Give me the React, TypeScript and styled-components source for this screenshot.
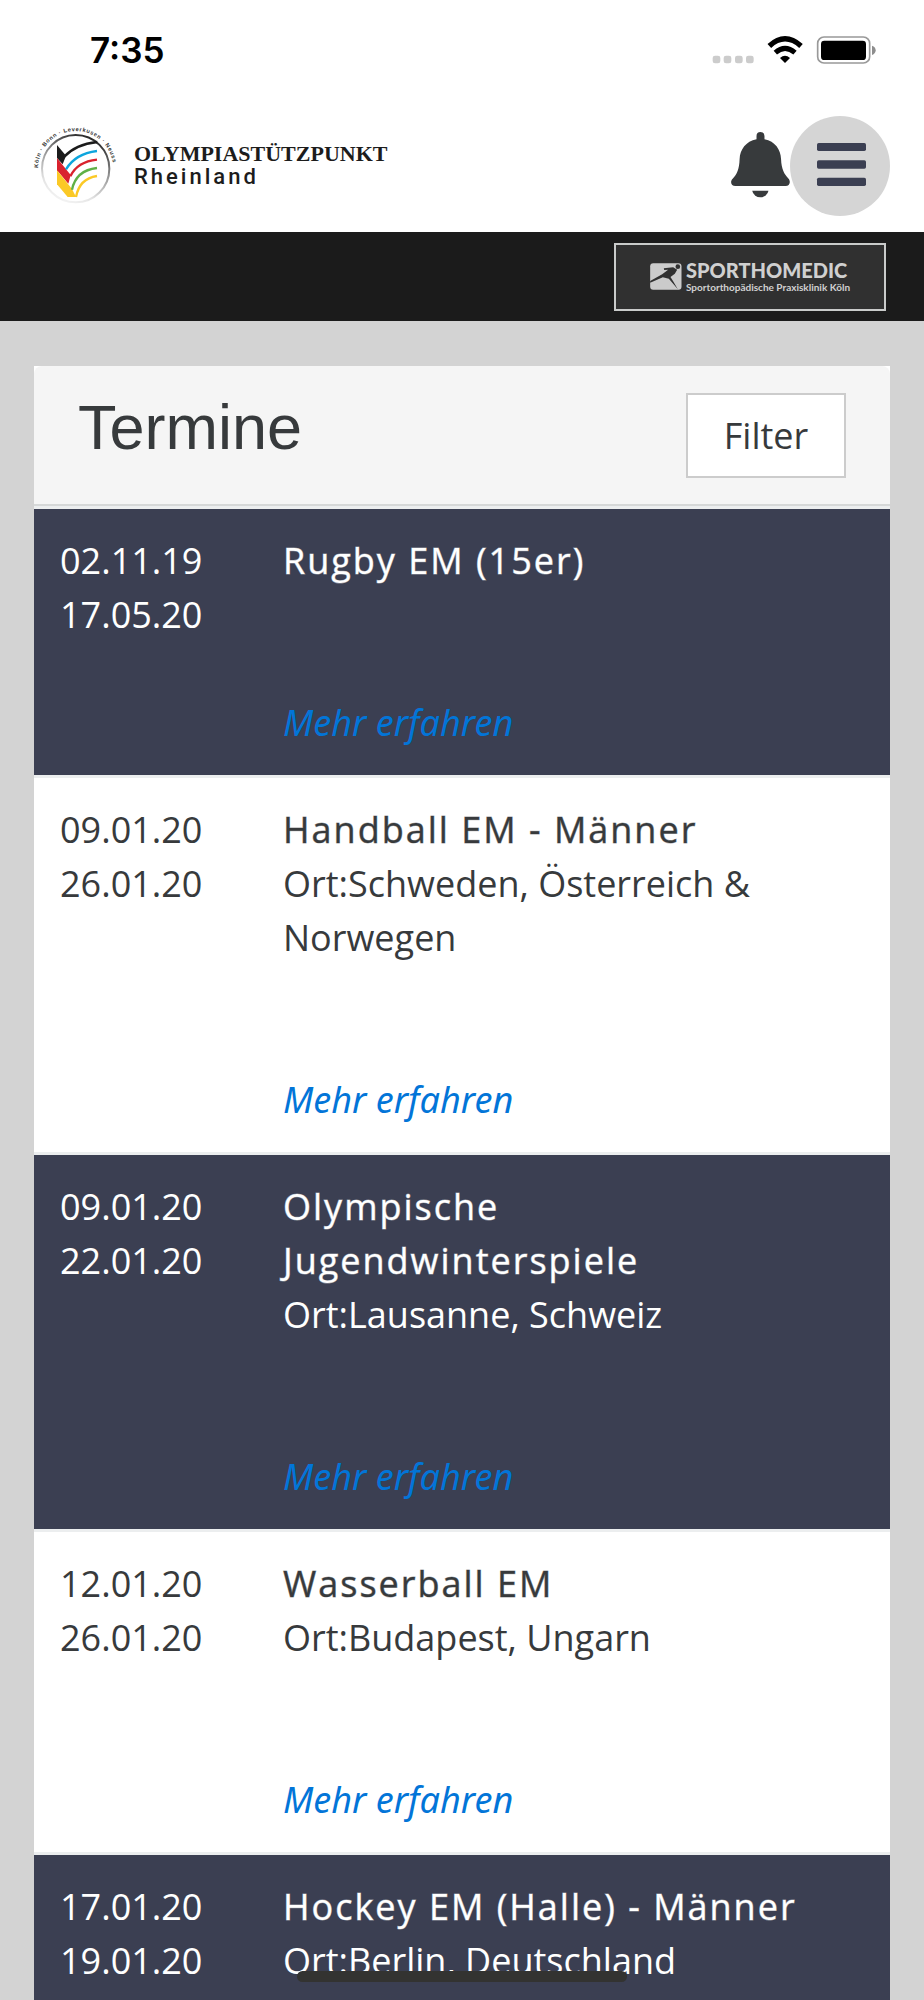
import React from "react";
import styled, { createGlobalStyle, css } from "styled-components";

const navy = "#3b3f52";
const ink = "#373a3c";

const GlobalStyle = createGlobalStyle`
  * { box-sizing: border-box; }
  body {
    margin: 0;
    background: #d3d3d3;
    color: ${ink};
    font-family: "Open Sans", "Liberation Sans", sans-serif;
    font-size: 36px;
    line-height: 54px;
  }
`;

const Shell = styled.div`
  display: flex;
  flex-direction: column;
  height: 100vh;
  overflow: hidden;
`;

const StatusBar = styled.div`
  display: flex;
  align-items: center;
  justify-content: space-between;
  height: 100px;
  padding: 0 48px 0 90px;
  flex: none;
  background: #fff;
  color: #000;
`;

const Clock = styled.time`
  font-family: Inter, "Liberation Sans", sans-serif;
  font-size: 35px;
  font-weight: 600;
`;

const Header = styled.header`
  display: flex;
  align-items: center;
  justify-content: space-between;
  height: 132px;
  padding: 0 34px 0 32px;
  flex: none;
  background: #fff;
`;

const Brand = styled.a`
  display: flex;
  align-items: center;
  gap: 12px;
  color: #1c1c1c;
  text-decoration: none;
`;

const BrandText = styled.span`
  display: flex;
  flex-direction: column;
`;

const BrandName = styled.span`
  font: bold 22px/22px "Liberation Serif", serif;
`;

const BrandRegion = styled.span`
  font: 500 22px/24px Roboto, "Liberation Sans", sans-serif;
  letter-spacing: 3px;
`;

const Actions = styled.div`
  display: flex;
  align-items: center;
`;

const IconButton = styled.button<{ $round?: boolean }>`
  display: flex;
  align-items: center;
  justify-content: center;
  padding: 0;
  border: 0;
  background: none;
  ${(p) =>
    p.$round &&
    css`
      width: 100px;
      height: 100px;
      border-radius: 50%;
      background: #d5d5d5;
    `}
`;

const SponsorBar = styled.aside`
  display: flex;
  align-items: center;
  justify-content: flex-end;
  height: 89px;
  padding: 0 38px;
  flex: none;
  background: #1b1b1b;
`;

const Sponsor = styled.a`
  display: flex;
  align-items: center;
  justify-content: center;
  gap: 4px;
  width: 272px;
  height: 68px;
  border: 2px solid #c9cbca;
  background: #303030;
  color: #d0d0d0;
  text-decoration: none;
`;

const SponsorText = styled.span`
  display: flex;
  flex-direction: column;
  font-family: Lato, sans-serif;
`;

const SponsorName = styled.span`
  font-size: 20px;
  font-weight: 900;
  line-height: 20px;
`;

const SponsorClaim = styled.span`
  font-size: 10px;
  font-weight: 700;
  line-height: 14px;
`;

const Main = styled.main`
  flex: 1;
  min-height: 0;
  padding: 45px 34px 0;
  overflow-y: auto;
  scrollbar-width: none;
`;

const Card = styled.section`
  background: #fff;
`;

const CardHeader = styled.div`
  display: flex;
  align-items: flex-start;
  justify-content: space-between;
  height: 140px;
  padding: 27px 44px 0 44px;
  border-bottom: 2px solid #d6d8d8;
  border-radius: 8px 8px 0 0;
  background: #f5f5f5;
`;

const Heading = styled.h1`
  margin: 0;
  font: 400 63px/68px "Liberation Sans", Arial, sans-serif;
`;

const FilterButton = styled.button`
  width: 160px;
  height: 85px;
  padding: 0;
  border: 2px solid #ccc;
  background: #fff;
  color: ${ink};
  font: inherit;
`;

const EventList = styled.ul`
  margin: 0;
  padding: 0;
  list-style: none;
`;

const EventRow = styled.li<{ $dark: boolean }>`
  display: grid;
  grid-template-columns: 223px 1fr;
  padding: 25px 60px 25px 26px;
  border-top: 3px solid #eceeef;
  background: ${(p) => (p.$dark ? navy : "#fff")};
  color: ${(p) => (p.$dark ? "#fff" : ink)};
`;

const Dates = styled.div`
  display: flex;
  flex-direction: column;
`;

const Details = styled.div`
  display: flex;
  flex-direction: column;
  align-items: flex-start;
`;

const Title = styled.h2`
  margin: 0;
  font-size: 36px;
  font-weight: 400;
  line-height: 54px;
  letter-spacing: 2px;
  -webkit-text-stroke: 1px color-mix(in srgb, currentColor 45%, transparent);
`;

const Place = styled.p`
  margin: 0;
`;

const MoreLink = styled.a<{ $gap: number }>`
  margin-top: ${(p) => p.$gap}px;
  color: #0275d8;
  font-family: "Noto Sans", "Open Sans", sans-serif;
  font-style: italic;
  text-decoration: none;
`;

const HomeIndicator = styled.div`
  position: fixed;
  bottom: 18px;
  left: 50%;
  width: 330px;
  height: 11px;
  margin-left: -165px;
  border-radius: 6px;
  background: #333331;
`;

const StatusIcons = () => (
  <svg width="164" height="28" viewBox="750 108 492 84" aria-hidden="true">
    {[752, 785, 819, 852].map((x) => (
      <rect key={x} x={x} y="167" width="23" height="23" rx="7" fill="#ccc" />
    ))}
    <g fill="none" stroke="#000">
      <path d="M922 138 Q969 95 1017 138" strokeWidth="16" />
      <path d="M940 158 Q969 132 999 158" strokeWidth="15" />
    </g>
    <path d="M969 189 L954 174 Q969 160 984 174 Z" />
    <rect x="1067" y="111" width="156" height="78" rx="19" fill="none" stroke="#999" strokeWidth="5" />
    <rect x="1077" y="122" width="135" height="58" rx="10" />
    <path d="M1230 137 Q1241 141 1241 151 Q1241 161 1230 165 Z" fill="#8d8d8d" />
  </svg>
);

const Emblem = () => (
  <svg width="90" height="80" viewBox="36 49 270 240" aria-hidden="true">
    <defs>
      <linearGradient id="ring" x1="0.7" y1="0" x2="0.3" y2="1">
        <stop offset="0" stopColor="#222" />
        <stop offset="0.45" stopColor="#999" />
        <stop offset="0.8" stopColor="#e4e4e4" />
        <stop offset="1" stopColor="#f4f4f4" />
      </linearGradient>
      <path id="arc" d="M54 177 A113 113 0 0 1 280 177" />
    </defs>
    <circle cx="167" cy="177" r="101" fill="none" stroke="url(#ring)" strokeWidth="6" />
    <text fill="#333" fontFamily="Liberation Sans Narrow, Liberation Sans, sans-serif" fontSize="17" fontWeight="700" letterSpacing="2">
      <textPath href="#arc" startOffset="2">Köln · Bonn · Leverkusen · Neuss</textPath>
    </text>
    <path d="M111 106 L138 138 L128 164 L111 145 Z" fill="#1b1b1b" />
    <path d="M111 145 L152 196 L145 222 L111 182 Z" fill="#d9222e" />
    <path d="M111 182 L156 238 L168 262 H143 L111 224 Z" fill="#fbc926" />
    <g fill="none" strokeWidth="7">
      <path d="M132 142 Q166 104 232 97" stroke="#1b1b1b" />
      <path d="M138 179 Q166 132 231 124" stroke="#0da5dd" />
      <path d="M151 200 Q172 156 231 150" stroke="#d9222e" />
      <path d="M156 240 Q168 182 231 175" stroke="#5fb046" />
      <path d="M168 262 Q178 207 231 199" stroke="#fbc926" />
    </g>
  </svg>
);

const BellIcon = () => (
  <svg width="59" height="69" viewBox="808 393 176 208" fill={ink} aria-hidden="true">
    <path d="M884 415 V405 a12 12 0 0 1 24 0 V415 C940 421 957 446 958 475 C959 505 968 520 980 533 C989 543 983 556 972 556 H820 C808 556 803 543 812 534 C825 520 832 505 833 475 C834 446 852 421 884 415 Z" />
    <path d="M871 570 H920 A25 25 0 0 1 871 570 Z" />
  </svg>
);

const MenuIcon = () => (
  <svg width="51" height="46" viewBox="0 0 153 138" fill={navy} aria-hidden="true">
    <rect x="6" width="147" height="24" rx="5" />
    <rect x="6" y="52" width="147" height="25" rx="5" />
    <rect x="6" y="104" width="147" height="25" rx="5" />
  </svg>
);

const RunnerIcon = () => (
  <svg width="32" height="27" viewBox="155 100 95 81" aria-hidden="true">
    <rect x="155" y="101" width="94" height="79" rx="9" fill="#cbcbcb" />
    <g fill="#303030">
      <circle cx="238" cy="111" r="7" />
      <path d="M196 116 L224 113 L236 120 L229 132 L216 142 L224 155 L238 179 L211 147 L193 143 L155 159 V154 L191 134 L209 120 L197 121 Z" />
    </g>
  </svg>
);

type Termin = {
  from: string;
  to: string;
  title: string;
  place?: string;
  gap?: number;
};

const termine: Termin[] = [
  { from: "02.11.19", to: "17.05.20", title: "Rugby EM (15er)", gap: 108 },
  { from: "09.01.20", to: "26.01.20", title: "Handball EM - Männer", place: "Schweden, Österreich & Norwegen", gap: 108 },
  { from: "09.01.20", to: "22.01.20", title: "Olympische Jugendwinterspiele", place: "Lausanne, Schweiz", gap: 108 },
  { from: "12.01.20", to: "26.01.20", title: "Wasserball EM", place: "Budapest, Ungarn", gap: 108 },
  { from: "17.01.20", to: "19.01.20", title: "Hockey EM (Halle) - Männer", place: "Berlin, Deutschland" },
];

export default function App() {
  return (
    <Shell>
      <GlobalStyle />
      <StatusBar>
        <Clock>7:35</Clock>
        <StatusIcons />
      </StatusBar>
      <Header>
        <Brand href="#">
          <Emblem />
          <BrandText>
            <BrandName>OLYMPIASTÜTZPUNKT</BrandName>
            <BrandRegion>Rheinland</BrandRegion>
          </BrandText>
        </Brand>
        <Actions>
          <IconButton type="button" aria-label="Benachrichtigungen">
            <BellIcon />
          </IconButton>
          <IconButton type="button" aria-label="Menü" $round>
            <MenuIcon />
          </IconButton>
        </Actions>
      </Header>
      <SponsorBar>
        <Sponsor href="#">
          <RunnerIcon />
          <SponsorText>
            <SponsorName>SPORTHOMEDIC</SponsorName>
            <SponsorClaim>Sportorthopädische Praxisklinik Köln</SponsorClaim>
          </SponsorText>
        </Sponsor>
      </SponsorBar>
      <Main>
        <Card>
          <CardHeader>
            <Heading>Termine</Heading>
            <FilterButton type="button">Filter</FilterButton>
          </CardHeader>
          <EventList>
            {termine.map((t, i) => (
              <EventRow key={t.title} $dark={i % 2 === 0}>
                <Dates>
                  <time>{t.from}</time>
                  <time>{t.to}</time>
                </Dates>
                <Details>
                  <Title>{t.title}</Title>
                  {t.place && <Place>{`Ort:${t.place}`}</Place>}
                  {t.gap && (
                    <MoreLink href="#" $gap={t.gap}>
                      Mehr erfahren
                    </MoreLink>
                  )}
                </Details>
              </EventRow>
            ))}
          </EventList>
        </Card>
      </Main>
      <HomeIndicator />
    </Shell>
  );
}
